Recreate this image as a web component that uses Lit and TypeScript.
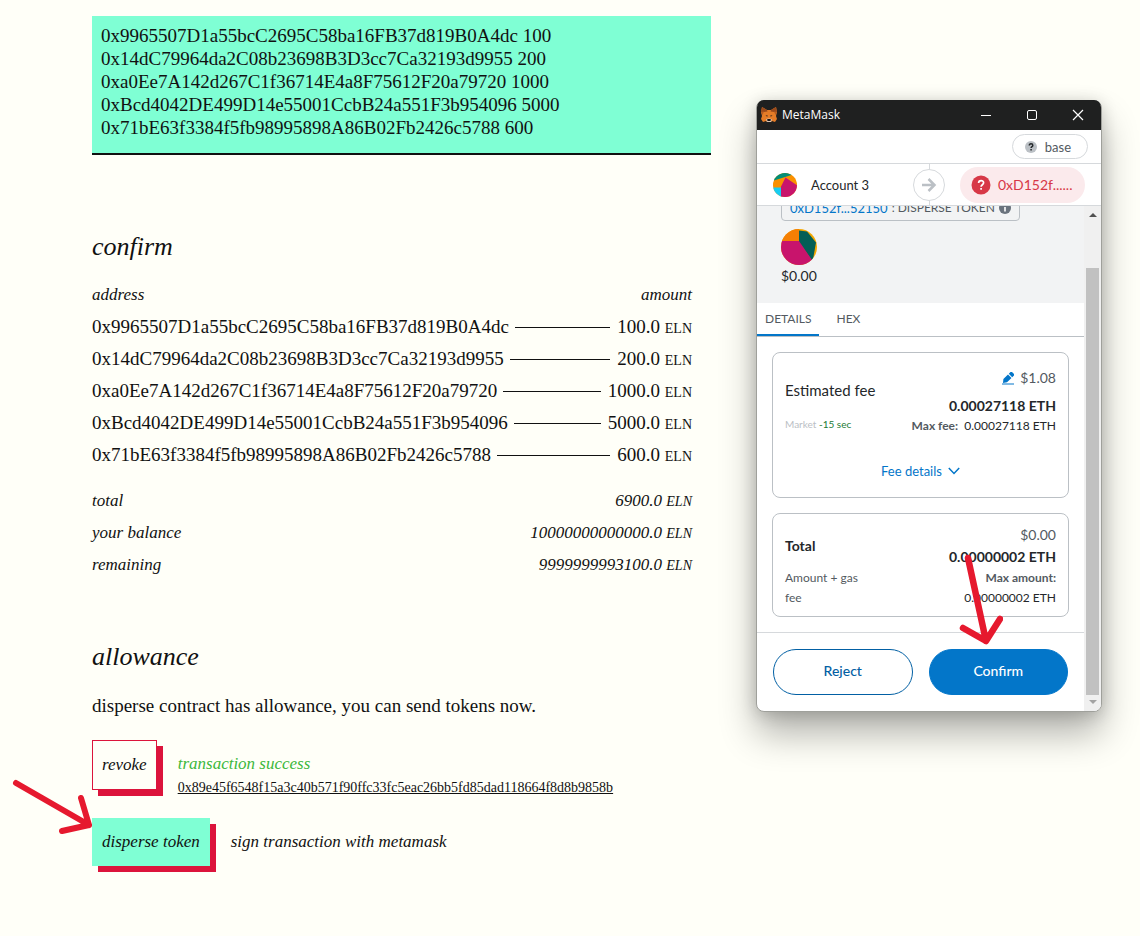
import { LitElement, html, css, svg } from "lit";
import { customElement, property } from "lit/decorators.js";

interface Payment {
  address: string;
  amount: string;
}

const PAYMENTS: Payment[] = [
  { address: "0x9965507D1a55bcC2695C58ba16FB37d819B0A4dc", amount: "100" },
  { address: "0x14dC79964da2C08b23698B3D3cc7Ca32193d9955", amount: "200" },
  { address: "0xa0Ee7A142d267C1f36714E4a8F75612F20a79720", amount: "1000" },
  { address: "0xBcd4042DE499D14e55001CcbB24a551F3b954096", amount: "5000" },
  { address: "0x71bE63f3384f5fb98995898A86B02Fb2426c5788", amount: "600" },
];

const TOTALS = [
  { label: "total", amount: "6900.0" },
  { label: "your balance", amount: "10000000000000.0" },
  { label: "remaining", amount: "9999999993100.0" },
];

const foxIcon = svg`<svg width="16" height="16" viewBox="0 0 16 16" aria-hidden="true">
  <path d="M1 0l5 3h4l5-3 1 5-1 4 1 3-2 3-3-1-1 1H6l-1-1-3 1-2-3 1-3-1-4z" fill="#e57c27"/>
  <path d="M1 0l5 3 .5 1.500L3 5 0 5zM15 0l-5 3-.5 1.500L13 5l3 0z" fill="#9a4a1c"/>
  <path d="M0 5l3-.5L1.500 8zM16 5l-3-.5L14.500 8z" fill="#b85d20"/>
  <path d="M4.500 8l2.500.8-1 .9zM11.500 8l-2.500.8 1 .9z" fill="#3b2a22"/>
  <path d="M5 12.500l2-1h2l2 1-1 2.500H6z" fill="#d9c2b2"/>
  <path d="M6.500 12h3l.5 1.300-1 .7H7l-1-.7z" fill="#1c1715"/>
</svg>`;

@customElement("wallet-window")
export class WalletWindow extends LitElement {
  static styles = css`
    :host {
      display: block;
      font-family: Lato, "Open Sans", sans-serif;
      font-size: 14px;
      line-height: 20px;
      color: #24272a;
    }
    * {
      box-sizing: border-box;
    }
    button {
      font: inherit;
      margin: 0;
      padding: 0;
      border: 0;
      background: none;
      color: inherit;
    }
    svg {
      display: block;
      flex: none;
    }
    .window {
      position: relative;
      border: 1px solid #9fa09b;
      border-radius: 8px;
      background: #fff;
      box-shadow: 0 22px 36px rgba(0, 0, 0, 0.3), 0 2px 16px rgba(0, 0, 0, 0.18);
    }
    .titlebar {
      display: flex;
      align-items: center;
      height: 30px;
      margin: -1px 0 0;
      padding: 0 17px 0 4px;
      gap: 5px;
      border-radius: 7px 7px 0 0;
      background: #1f2020;
      color: #fff;
      font: 12px/16px "Open Sans", sans-serif;
    }
    .caption {
      flex: 1;
    }
    .controls {
      display: flex;
      gap: 34px;
    }
    .network {
      display: flex;
      justify-content: flex-end;
      padding: 4px 13px;
      border-bottom: 1px solid #d6d9dc;
    }
    .network-pill {
      display: flex;
      align-items: center;
      height: 25px;
      padding: 0 16px 0 12px;
      gap: 8px;
      border: 1px solid #d6d9dc;
      border-radius: 13px;
      font-size: 13px;
      color: #535a61;
    }
    .parties {
      display: grid;
      grid-template-columns: 156px 32px 1fr;
      align-items: center;
      height: 42px;
      border-bottom: 1px solid #d6d9dc;
      padding-right: 16px;
    }
    .sender {
      display: flex;
      align-items: center;
      gap: 14px;
      padding-left: 16px;
      font-size: 13px;
    }
    .recipient {
      display: flex;
      align-items: center;
      justify-self: end;
      height: 36px;
      width: 125px;
      padding-left: 11px;
      gap: 7px;
      border-radius: 18px;
      background: #fbeaec;
      color: #d73847;
    }
    .scroller {
      display: grid;
      grid-template-columns: 1fr 17px;
      overflow: hidden;
      border-radius: 0 0 7px 7px;
    }
    .summary {
      display: flow-root;
      padding: 0 24px 17px;
      background: #f2f3f4;
    }
    .contract {
      display: flex;
      width: max-content;
      align-items: center;
      height: 26px;
      margin-top: -11px;
      padding: 0 8px;
      gap: 4px;
      border: 1px solid #bbc0c5;
      border-radius: 4px;
      font-size: 12px;
      color: #535a61;
      white-space: nowrap;
    }
    .contract a {
      color: #0376c9;
      text-decoration: none;
      font-size: 13px;
    }
    .token {
      display: block;
      margin: 8px 0 1px;
    }
    .tabs {
      display: flex;
      height: 34px;
      border-bottom: 1px solid #bbc0c5;
    }
    .tab {
      height: 33px;
      padding: 0 8px;
      margin-right: 9px;
      font-size: 12px;
      color: #535a61;
      border-bottom: 2px solid transparent;
    }
    .tab.active {
      border-color: #0376c9;
    }
    .cards {
      display: grid;
      gap: 15px;
      padding: 15px;
      border-bottom: 1px solid #d6d9dc;
    }
    .card {
      padding: 11px 12px 8px;
      border: 1px solid #bbc0c5;
      border-radius: 8px;
    }
    .card.fee {
      padding: 15px 12px 16px;
    }
    .columns {
      display: flex;
      justify-content: space-between;
    }
    .left {
      width: 88px;
      padding-top: 11px;
    }
    .left.fee-name {
      padding-top: 12px;
    }
    .right {
      text-align: right;
    }
    .fiat {
      display: flex;
      justify-content: flex-end;
      align-items: center;
      gap: 6px;
      color: #535a61;
    }
    .name {
      white-space: nowrap;
      font-size: 15px;
    }
    .strong {
      font-weight: 700;
    }
    .row-gap {
      margin-top: 8px;
    }
    .total-gap {
      margin: 2px 0 1px;
    }
    .small {
      font-size: 12px;
    }
    .note {
      margin-top: 12px;
    }
    .muted {
      color: #535a61;
    }
    .timing {
      margin-top: 14px;
      font-size: 10px;
      color: #bbc0c5;
    }
    .timing em {
      font-style: normal;
      color: #1c7b35;
    }
    .details {
      display: flex;
      align-items: center;
      gap: 6px;
      margin: 25px auto 0;
      font-size: 13px;
      color: #0376c9;
    }
    .actions {
      position: relative;
      display: grid;
      grid-template-columns: 1fr 1fr;
      gap: 16px;
      padding: 16px;
    }
    .action {
      height: 46px;
      padding-bottom: 3px;
      border: 1px solid #0260a4;
      border-radius: 23px;
      color: #0260a4;
      font-weight: 500;
    }
    .action.primary {
      border-color: #0376c9;
      background: #0376c9;
      color: #fff;
    }
    .scrollbar {
      display: flex;
      flex-direction: column;
      align-items: center;
      padding: 6px 2px;
      background: #f0f0f0;
    }
    .thumb {
      flex: 1;
      width: 13px;
      margin: 51px 0 5px;
      background: #c1c1c1;
    }
    .pointer {
      position: absolute;
      right: 81px;
      top: -81px;
      pointer-events: none;
    }
  `;

  render() {
    return html`
      <section class="window" aria-label="MetaMask">
        <header class="titlebar">
          ${foxIcon}
          <span class="caption">MetaMask</span>
          <div class="controls">
            <button aria-label="Minimize">
              <svg width="12" height="12" viewBox="0 0 12 12"><path d="M1 6.500h10" stroke="#fff" /></svg>
            </button>
            <button aria-label="Maximize">
              <svg width="12" height="12" viewBox="0 0 12 12">
                <rect x="1.500" y="1.500" width="9" height="9" rx="1.500" fill="none" stroke="#fff" />
              </svg>
            </button>
            <button aria-label="Close">
              <svg width="12" height="12" viewBox="0 0 12 12"><path d="M1 1l10 10M11 1L1 11" stroke="#fff" stroke-width="1.200" /></svg>
            </button>
          </div>
        </header>
        <div class="network">
          <div class="network-pill">
            <svg width="12" height="12" viewBox="0 0 12 12" aria-hidden="true">
              <circle cx="6" cy="6" r="6" fill="#bbc0c5" />
              <path d="M4.300 4.600c0-2.400 3.500-2.200 3.500-.2 0 1.200-1.700 1.200-1.700 2.500M6.100 8v1.400" fill="none" stroke="#24272a" stroke-width="1.500" />
            </svg>
            base
          </div>
        </div>
        <div class="parties">
          <div class="sender">
            <svg width="24" height="24" viewBox="0 0 24 24" aria-hidden="true">
              <defs><clipPath id="sender"><circle cx="12" cy="12" r="12" /></clipPath></defs>
              <g clip-path="url(#sender)">
                <path d="M0 0h24v24H0z" fill="#fa9000" />
                <path d="M0 0h24L20 1.500 1 7.500z" fill="#018e77" />
                <path d="M0 14.500h9V24H0z" fill="#18cdf2" />
                <path d="M12.500 4.500L25 13v12H8V13.500z" fill="#c8146c" />
              </g>
            </svg>
            Account 3
          </div>
          <svg width="32" height="42" viewBox="0 0 32 42" aria-hidden="true">
            <path d="M16.500 0v42" stroke="#d6d9dc" />
            <circle cx="16" cy="21" r="15.500" fill="#fff" stroke="#d6d9dc" />
            <path d="M9 21h12.500M15.500 15l6 6-6 6" fill="none" stroke="#bbc0c5" stroke-width="2.500" />
          </svg>
          <div class="recipient">
            <svg width="20" height="20" viewBox="0 0 20 20" aria-hidden="true">
              <circle cx="10" cy="10" r="9.500" fill="#d73847" />
              <path d="M7.600 8c0-3.300 5-3.200 5-.2 0 2-2.500 1.900-2.500 4M10.100 13v1.800" fill="none" stroke="#fff" stroke-width="1.700" />
            </svg>
            0xD152f......
          </div>
        </div>
        <div class="scroller">
          <div>
            <div class="summary">
              <div class="contract">
                <a href="#">0xD152f...52150</a><span>: DISPERSE TOKEN</span>
                <svg width="12" height="12" viewBox="0 0 12 12" aria-hidden="true">
                  <circle cx="6" cy="6" r="6" fill="#6a737d" />
                  <path d="M6 2.300v1.500M6 5v4.500" stroke="#fff" stroke-width="1.600" />
                </svg>
              </div>
              <svg class="token" width="36" height="36" viewBox="0 0 36 36" aria-hidden="true">
                <defs><clipPath id="token"><circle cx="18" cy="18" r="18" /></clipPath></defs>
                <g clip-path="url(#token)">
                  <path d="M0 0h36v36H0z" fill="#f5a700" />
                  <path d="M0 0h18v12H0z" fill="#f57f04" />
                  <path d="M18 1.500l8 1 9 11-3 17-1 1-13-18z" fill="#035e56" />
                  <path d="M0 12h18l13 19-5 5H0z" fill="#c8146c" />
                </g>
              </svg>
              <div class="amount">$0.00</div>
            </div>
            <nav class="tabs">
              <button class="tab active">DETAILS</button>
              <button class="tab">HEX</button>
            </nav>
            <div class="cards">
              <div class="card fee">
                <div class="columns">
                  <div class="left fee-name">
                    <div class="name">Estimated fee</div>
                    <div class="timing">Market <em>-15 sec</em></div>
                  </div>
                  <div class="right">
                    <div class="fiat">
                      <svg width="12" height="13" viewBox="0 0 12 13" aria-hidden="true">
                        <path d="M0 12h12" stroke="#81bae4" stroke-width="2" />
                        <path d="M6 2.500l3.500 3.500L5 10.300 1 11l.4-4zM6.800 1.800L8.500 0h1.500L12 2v1.500L10.200 5.200z" fill="#0376c9" />
                      </svg>
                      $1.08
                    </div>
                    <div class="strong row-gap">0.00027118 ETH</div>
                    <div class="small"><b class="muted">Max fee:</b>&nbsp; 0.00027118 ETH</div>
                  </div>
                </div>
                <button class="details">
                  Fee details
                  <svg width="12" height="8" viewBox="0 0 12 8" aria-hidden="true">
                    <path d="M.8 1L6 6.500 11.200 1" fill="none" stroke="#0376c9" stroke-width="1.500" />
                  </svg>
                </button>
              </div>
              <div class="card">
                <div class="columns">
                  <div class="left">
                    <div class="strong">Total</div>
                    <div class="small muted note">Amount + gas fee</div>
                  </div>
                  <div class="right">
                    <div class="fiat">$0.00</div>
                    <div class="strong total-gap">0.00000002 ETH</div>
                    <div class="small"><b class="muted">Max amount:</b><br />0.00000002 ETH</div>
                  </div>
                </div>
              </div>
            </div>
            <div class="actions">
              <button class="action">Reject</button>
              <button class="action primary">Confirm</button>
              <svg class="pointer" width="44" height="94" viewBox="0 0 44 94" aria-hidden="true">
                <path d="M9 6l18 83M4 76l23 13L41 67" fill="none" stroke="#e6192e" stroke-width="6.500" stroke-linecap="round" stroke-linejoin="round" />
              </svg>
            </div>
          </div>
          <div class="scrollbar" aria-hidden="true">
            <svg width="8" height="5" viewBox="0 0 8 5"><path d="M0 5l4-4 4 4z" fill="#505050" /></svg>
            <div class="thumb"></div>
            <svg width="8" height="5" viewBox="0 0 8 5"><path d="M0 0l4 4 4-4z" fill="#a3a3a3" /></svg>
          </div>
        </div>
      </section>
    `;
  }
}

@customElement("app-root")
export class AppRoot extends LitElement {
  @property() symbol = "ELN";

  static styles = css`
    :host {
      display: block;
      position: relative;
      min-height: 100vh;
      box-sizing: border-box;
      padding: 16px 0 64px 92px;
      background: #fffff8;
      color: #111;
      font-family: "Liberation Serif", serif;
      font-size: 19px;
      line-height: 24px;
      overflow: hidden;
    }
    * {
      box-sizing: border-box;
    }
    main {
      max-width: 619px;
    }
    .recipients {
      display: block;
      width: 100%;
      height: 139px;
      padding: 8px 9px;
      border: 0;
      border-bottom: 2px solid #111;
      border-radius: 0;
      outline: 0;
      resize: none;
      background: aquamarine;
      color: inherit;
      font: inherit;
      line-height: 23px;
      overflow: hidden;
    }
    h2 {
      margin: 0;
      font-size: 26px;
      line-height: 32px;
      font-weight: 400;
      font-style: italic;
    }
    .confirm {
      margin-top: 76px;
      padding-right: 19px;
    }
    .ledger {
      display: block;
      width: 100%;
      margin-top: 16px;
      border-spacing: 0;
    }
    .ledger tbody,
    .ledger thead,
    .ledger tfoot {
      display: block;
    }
    .ledger tr {
      display: flex;
      justify-content: space-between;
      align-items: center;
      height: 32px;
    }
    .ledger th,
    .ledger td {
      padding: 0;
      font-weight: 400;
      white-space: nowrap;
    }
    .ledger tfoot {
      margin-top: 14px;
    }
    .ledger thead th,
    .ledger tfoot,
    .label {
      font-size: 17px;
      font-style: italic;
    }
    .ledger .leader {
      flex: 1;
      height: 1px;
      margin: 0 7px 0 6px;
      background: #111;
    }
    .symbol {
      font-size: 14px;
      line-height: 14px;
    }
    .allowance {
      margin-top: 60px;
    }
    .allowance p {
      margin: 21px 0 22px;
    }
    .step {
      display: flex;
      align-items: flex-start;
      gap: 21px;
    }
    .step + .step {
      margin-top: 18px;
    }
    .cta {
      height: 50px;
      margin: 0;
      padding: 0 9px;
      border: 1px solid crimson;
      border-radius: 0;
      background: #fffff8;
      box-shadow: 6px 6px 0 crimson;
      color: #111;
      font: italic 17px/24px "Liberation Serif", serif;
    }
    .cta.filled {
      height: 48px;
      border-color: aquamarine;
      background: aquamarine;
    }
    .status {
      padding-top: 12px;
    }
    .success {
      color: #3cb83c;
    }
    .hash {
      display: block;
      font-size: 14px;
      color: #111;
    }
    .anchor {
      position: relative;
    }
    .pointer {
      position: absolute;
      right: 100%;
      top: -40px;
      pointer-events: none;
    }
    .wallet {
      position: absolute;
      top: 100px;
      right: 38px;
      width: 346px;
    }
  `;

  render() {
    const list = PAYMENTS.map((p) => `${p.address} ${p.amount}`).join("\n");
    return html`
      <main>
        <textarea class="recipients" aria-label="recipients and amounts" spellcheck="false" .value=${list}></textarea>
        <section class="confirm">
          <h2>confirm</h2>
          <table class="ledger">
            <thead>
              <tr><th>address</th><th>amount</th></tr>
            </thead>
            <tbody>
              ${PAYMENTS.map(
                (p) => html`<tr>
                  <td>${p.address}</td>
                  <td class="leader"></td>
                  <td>${p.amount}.0 <span class="symbol">${this.symbol}</span></td>
                </tr>`
              )}
            </tbody>
            <tfoot>
              ${TOTALS.map(
                (t) => html`<tr>
                  <th>${t.label}</th>
                  <td>${t.amount} <span class="symbol">${this.symbol}</span></td>
                </tr>`
              )}
            </tfoot>
          </table>
        </section>
        <section class="allowance">
          <h2>allowance</h2>
          <p>disperse contract has allowance, you can send tokens now.</p>
          <div class="step">
            <button class="cta">revoke</button>
            <div class="status">
              <div class="label success">transaction success</div>
              <a class="hash" href="#">0x89e45f6548f15a3c40b571f90ffc33fc5eac26bb5fd85dad118664f8d8b9858b</a>
            </div>
          </div>
          <div class="step">
            <div class="anchor">
              <button class="cta filled">disperse token</button>
              <svg class="pointer" width="80" height="58" viewBox="0 0 80 58" aria-hidden="true">
                <path d="M4 5l73 42M50 53l27-6L69 20" fill="none" stroke="#e6192e" stroke-width="6" stroke-linecap="round" stroke-linejoin="round" />
              </svg>
            </div>
            <div class="status label">sign transaction with metamask</div>
          </div>
        </section>
      </main>
      <wallet-window class="wallet"></wallet-window>
    `;
  }
}
